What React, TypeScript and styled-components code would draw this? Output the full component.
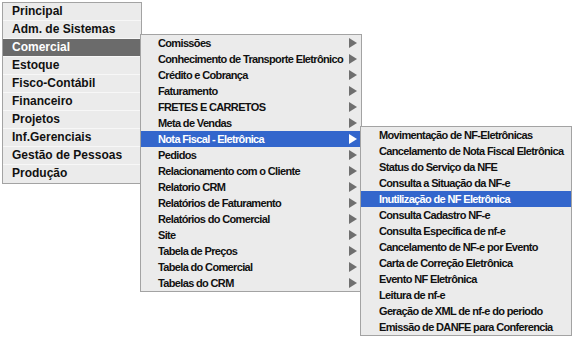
import { createGlobalStyle, styled } from 'styled-components'

type Entry = { label: string; sub?: boolean }

const mainItems = [
  'Principal',
  'Adm. de Sistemas',
  'Comercial',
  'Estoque',
  'Fisco-Contábil',
  'Financeiro',
  'Projetos',
  'Inf.Gerenciais',
  'Gestão de Pessoas',
  'Produção',
]

const comercialItems: Entry[] = [
  'Comissões',
  'Conhecimento de Transporte Eletrônico',
  'Crédito e Cobrança',
  'Faturamento',
  'FRETES E CARRETOS',
  'Meta de Vendas',
  'Nota Fiscal - Eletrônica',
  'Pedidos',
  'Relacionamento com o Cliente',
  'Relatorio CRM',
  'Relatórios de Faturamento',
  'Relatórios do Comercial',
  'Site',
  'Tabela de Preços',
  'Tabela do Comercial',
  'Tabelas do CRM',
].map((label) => ({ label, sub: true }))

const nfeItems = [
  'Movimentação de NF-Eletrônicas',
  'Cancelamento de Nota Fiscal Eletrônica',
  'Status do Serviço da NFE',
  'Consulta a Situação da NF-e',
  'Inutilização de NF Eletrônica',
  'Consulta Cadastro NF-e',
  'Consulta Especifica de nf-e',
  'Cancelamento de NF-e por Evento',
  'Carta de Correção Eletrônica',
  'Evento NF Eletrônica',
  'Leitura de nf-e',
  'Geração de XML de nf-e do periodo',
  'Emissão de DANFE para Conferencia',
]

function Arrow({ active }: { active?: boolean }) {
  return (
    <ArrowIcon width="8" height="10" viewBox="0 0 8 10">
      <path d="M0 0 L8 5 L0 10 Z" fill={active ? '#ffffff' : '#6f6f6f'} />
    </ArrowIcon>
  )
}

export default function App() {
  return (
    <>
      <GlobalStyle />
      <Page>
        <MainMenu>
          {mainItems.map((label) => (
            <MainItem key={label} $active={label === 'Comercial'}>
              {label}
              {label === 'Comercial' && (
                <SubMenu $top={-5} $width={222}>
                  {comercialItems.map((item) => {
                    const active = item.label === 'Nota Fiscal - Eletrônica'
                    return (
                      <SubItem key={item.label} $active={active} $pad={17}>
                        <span>{item.label}</span>
                        {item.sub && <Arrow active={active} />}
                        {active && (
                          <SubMenu $top={-5} $width={212}>
                            {nfeItems.map((nf) => (
                              <SubItem
                                key={nf}
                                $active={nf === 'Inutilização de NF Eletrônica'}
                                $pad={18}
                              >
                                <span>{nf}</span>
                              </SubItem>
                            ))}
                          </SubMenu>
                        )}
                      </SubItem>
                    )
                  })}
                </SubMenu>
              )}
            </MainItem>
          ))}
        </MainMenu>
      </Page>
    </>
  )
}

const GlobalStyle = createGlobalStyle`
  body {
    margin: 0;
    background: #ffffff;
    font-family: "Liberation Sans", Arial, sans-serif;
  }
`

const Page = styled.div`
  padding: 2px;
  width: 572px;
  height: 339px;
  box-sizing: border-box;
`

const MainMenu = styled.ul`
  list-style: none;
  margin: 0;
  padding: 0;
  width: 140px;
  box-sizing: border-box;
  border: 1px solid #a3a3a3;
  background: #ebebeb;
`

const MainItem = styled.li<{ $active?: boolean }>`
  position: relative;
  height: 18px;
  box-sizing: border-box;
  padding-left: 9px;
  border-bottom: 1px solid #f7f7f7;
  font-size: 12px;
  font-weight: bold;
  line-height: 17px;
  color: ${(p) => (p.$active ? '#ffffff' : '#111111')};
  background: ${(p) => (p.$active ? '#6b6b6b' : '#ebebeb')};

  &:last-child {
    border-bottom: none;
  }
`

const SubMenu = styled.ul<{ $top: number; $width: number }>`
  position: absolute;
  top: ${(p) => p.$top}px;
  left: calc(100% - 1px);
  z-index: 1;
  list-style: none;
  margin: 0;
  padding: 0;
  width: ${(p) => p.$width}px;
  box-sizing: border-box;
  border: 1px solid #a3a3a3;
  background: #ebebeb;
`

const SubItem = styled.li<{ $active?: boolean; $pad: number }>`
  position: relative;
  display: flex;
  align-items: center;
  justify-content: space-between;
  height: 16px;
  padding: 0 4px 0 ${(p) => p.$pad}px;
  font-size: 11px;
  letter-spacing: -0.65px;
  font-weight: bold;
  color: ${(p) => (p.$active ? '#ffffff' : '#111111')};
  background: ${(p) => (p.$active ? '#3366cc' : 'transparent')};
  white-space: nowrap;
`

const ArrowIcon = styled.svg`
  flex: none;
  display: block;
`
